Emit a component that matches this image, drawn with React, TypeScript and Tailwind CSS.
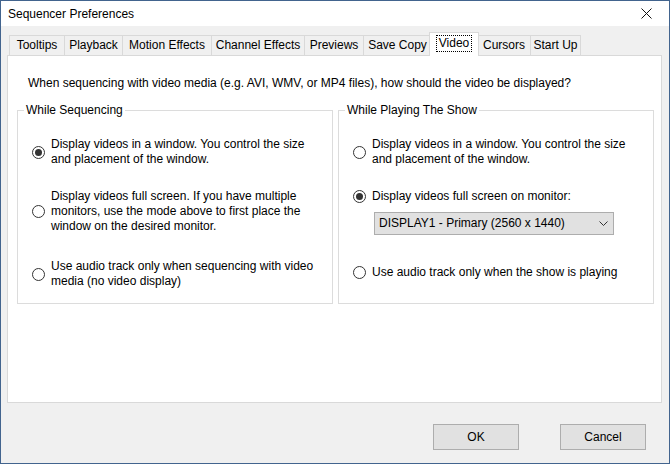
import React from "react";

const FONT = { fontFamily: '"Liberation Sans", Arial, sans-serif' };

function Radio({ checked }: { checked?: boolean }) {
  return (
    <span className="w-[13px] h-[13px] shrink-0 rounded-full border border-[#333333] bg-white flex items-center justify-center">
      {checked ? <span className="w-[7px] h-[7px] rounded-full bg-[#333333]" /> : null}
    </span>
  );
}

function Option({
  checked,
  lines,
  className,
}: {
  checked?: boolean;
  lines: string[];
  className?: string;
}) {
  return (
    <div className={"flex items-center gap-[6px] pl-[14px] " + (className ?? "")}>
      <Radio checked={checked} />
      <div className="leading-[15px] whitespace-nowrap">
        {lines.map((l, i) => (
          <div key={i}>{l}</div>
        ))}
      </div>
    </div>
  );
}

const tabs: { label: string; w: string; selected?: boolean }[] = [
  { label: "Tooltips", w: "w-[55px]" },
  { label: "Playback", w: "w-[58px]" },
  { label: "Motion Effects", w: "w-[89px]" },
  { label: "Channel Effects", w: "w-[93px]" },
  { label: "Previews", w: "w-[59px]" },
  { label: "Save Copy", w: "w-[68px]" },
  { label: "Video", w: "w-[50px]", selected: true },
  { label: "Cursors", w: "w-[53px]" },
  { label: "Start Up", w: "w-[51px]" },
];

export default function App() {
  return (
    <div
      className="w-[670px] h-[464px] border border-[#42648e] bg-[#f0f0f0] flex flex-col text-[12px] text-black overflow-hidden"
      style={FONT}
    >
      {/* Title bar */}
      <div className="h-[25px] bg-white flex items-center justify-between shrink-0">
        <span className="pl-[7px] pt-[1px]">Sequencer Preferences</span>
        <div className="w-[46px] h-full flex items-center justify-center">
          <svg width="11" height="11" viewBox="0 0 11 11">
            <path d="M0.5 0.5 L10.5 10.5 M10.5 0.5 L0.5 10.5" stroke="#111" strokeWidth="1" />
          </svg>
        </div>
      </div>

      {/* Tabs */}
      <div className="mt-[6px] ml-[6px] pl-[2px] h-[24px] -mb-px flex items-end relative z-10">
        {tabs.map((t) =>
          t.selected ? (
            <div
              key={t.label}
              className={
                t.w +
                " -mx-[2px] h-[24px] bg-white border border-b-0 border-[#d9d9d9] flex items-start justify-center pt-[2px] relative z-10"
              }
            >
              <span className="border border-dotted border-black px-[2px] leading-[15px] h-[17px]">
                {t.label}
              </span>
            </div>
          ) : (
            <div
              key={t.label}
              className={
                t.w +
                " h-[20px] mb-px bg-[#f0f0f0] border-t border-l border-[#d9d9d9] last:border-r flex items-center justify-center leading-[15px]"
              }
            >
              {t.label}
            </div>
          )
        )}
      </div>

      {/* Panel */}
      <div className="ml-[6px] w-[655px] h-[348px] bg-white border border-[#d9d9d9] shrink-0 flex flex-col">
        <div className="pt-[20px] pl-[20px] leading-[15px] whitespace-nowrap">
          When sequencing with video media (e.g. AVI, WMV, or MP4 files), how should the video be displayed?
        </div>

        <div className="flex gap-[5px] mt-[12px] ml-[9px]">
          <fieldset className="w-[316px] h-[201px] border border-[#dcdcdc] m-0 p-0">
            <legend className="ml-[6px] px-[2px] leading-[15px]">While Sequencing</legend>
            <Option
              className="mt-[19px]"
              checked
              lines={["Display videos in a window. You control the size", "and placement of the window."]}
            />
            <Option
              className="mt-[22px]"
              lines={[
                "Display videos full screen. If you have multiple",
                "monitors, use the mode above to first place the",
                "window on the desired monitor.",
              ]}
            />
            <Option
              className="mt-[25px]"
              lines={["Use audio track only when sequencing with video", "media (no video display)"]}
            />
          </fieldset>

          <fieldset className="w-[316px] h-[201px] border border-[#dcdcdc] m-0 p-0">
            <legend className="ml-[6px] px-[2px] leading-[15px]">While Playing The Show</legend>
            <Option
              className="mt-[19px]"
              lines={["Display videos in a window. You control the size", "and placement of the window."]}
            />
            <Option className="mt-[22px]" checked lines={["Display videos full screen on monitor:"]} />
            <div className="mt-[8px] ml-[35px] w-[240px] h-[23px] border border-[#adadad] bg-[#e1e1e1] flex items-center justify-between pl-[4px] pr-[5px]">
              <span className="leading-[15px]">DISPLAY1 - Primary (2560 x 1440)</span>
              <svg width="9" height="5" viewBox="0 0 9 5">
                <path d="M0.5 0.5 L4.5 4.5 L8.5 0.5" stroke="#333" strokeWidth="1" fill="none" />
              </svg>
            </div>
            <Option className="mt-[30px]" lines={["Use audio track only when the show is playing"]} />
          </fieldset>
        </div>
      </div>

      {/* Footer */}
      <div className="flex justify-end gap-[41px] pr-[23px] mt-[21px]">
        <button className="w-[86px] h-[26px] border border-[#adadad] bg-[#e1e1e1] leading-[15px]">OK</button>
        <button className="w-[86px] h-[26px] border border-[#adadad] bg-[#e1e1e1] leading-[15px]">Cancel</button>
      </div>
    </div>
  );
}
